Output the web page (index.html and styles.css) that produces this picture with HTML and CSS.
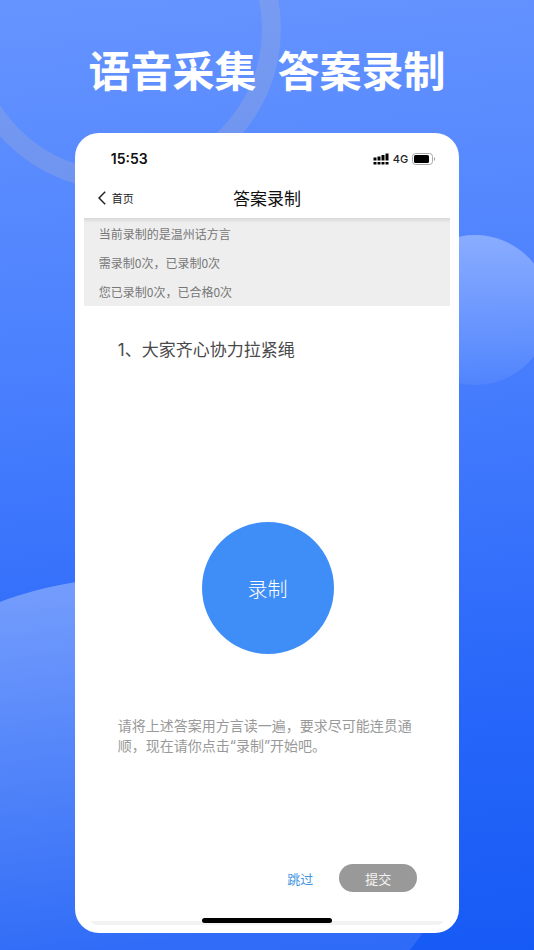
FILE: index.html
```html
<!DOCTYPE html>
<html lang="zh-CN">
<head>
    <meta charset="UTF-8">
    <meta name="viewport" content="width=device-width, initial-scale=1.0">
    <title>答案录制</title>
    <link rel="stylesheet" href="styles.css">
</head>
<body>
    <svg class="backdrop" viewBox="0 0 534 950" preserveAspectRatio="xMidYMid slice" aria-hidden="true">
        <defs>
            <linearGradient id="ballFill" x1="0" y1="0" x2="0" y2="1">
                <stop offset="0" stop-color="#fff" stop-opacity="0.32"/>
                <stop offset="1" stop-color="#fff" stop-opacity="0.06"/>
            </linearGradient>
            <linearGradient id="hillFill" gradientUnits="userSpaceOnUse" x1="60" y1="576" x2="110" y2="950">
                <stop offset="0" stop-color="#fff" stop-opacity="0.31"/>
                <stop offset="1" stop-color="#fff" stop-opacity="0.1"/>
            </linearGradient>
        </defs>
        <circle cx="120" cy="29" r="151.5" fill="none" stroke="#b0b4c8" stroke-opacity="0.26" stroke-width="19"/>
        <circle cx="475" cy="310" r="75" fill="url(#ballFill)"/>
        <ellipse cx="140" cy="821" rx="318" ry="244" fill="url(#hillFill)"/>
    </svg>

    <div class="page">
        <h1 class="headline"><span>语音采集</span> <span>答案录制</span></h1>

        <div class="phone">
            <div class="status-bar">
                <span class="time">15:53</span>
                <div class="status-icons">
                    <svg width="16" height="12" viewBox="0 0 16 12" aria-hidden="true">
                        <path d="M0.5 4.5h3v3h-3zM4.5 3.5h3v4h-3zM8.5 2h3v5.5h-3zM12.5 0.5h3v7h-3zM0.5 9h3v2.5h-3zM4.5 9h3v2.5h-3zM8.5 9h3v2.5h-3zM12.5 9h3v2.5h-3z"/>
                    </svg>
                    <span class="network">4G</span>
                    <svg width="24" height="12" viewBox="0 0 24 12" aria-hidden="true">
                        <rect x="0.5" y="0.5" width="20" height="11" rx="3" fill="none" stroke="#a8a8a8"/>
                        <rect x="2" y="2" width="15" height="8" rx="1.5"/>
                        <path d="M22 4v4c1.6-.7 1.6-3.3 0-4z" fill="#a8a8a8"/>
                    </svg>
                </div>
            </div>

            <div class="nav-bar">
                <a class="back" href="#">
                    <svg width="8" height="14" viewBox="0 0 8 14" fill="none" stroke="#222" stroke-width="1.5" aria-hidden="true">
                        <path d="M7.2 0.8L1 7l6.2 6.2"/>
                    </svg>
                    首页
                </a>
                <h2 class="nav-title">答案录制</h2>
            </div>

            <div class="info">
                <p>当前录制的是温州话方言</p>
                <p>需录制0次，已录制0次</p>
                <p>您已录制0次，已合格0次</p>
            </div>

            <div class="content">
                <p class="question">1、大家齐心协力拉紧绳</p>
                <button class="record" type="button">录制</button>
                <p class="hint">请将上述答案用方言读一遍，要求尽可能连贯通顺，现在请你点击“录制”开始吧。</p>
                <div class="actions">
                    <button class="skip" type="button">跳过</button>
                    <button class="submit" type="button">提交</button>
                </div>
            </div>

            <div class="home-area">
                <div class="home-bar"></div>
            </div>
        </div>
    </div>
</body>
</html>
```

FILE: styles.css
```css
* {
    box-sizing: border-box;
}
body {
    margin: 0;
    min-height: 100vh;
    position: relative;
    overflow-x: hidden;
    font-family: Inter, "Noto Sans CJK SC", sans-serif;
    background: linear-gradient(175deg, #6694ff 0%, #4a80fe 38%, #2766f9 75%, #165af5 100%);
}
h1, h2, p {
    margin: 0;
}
button {
    padding: 0;
    border: 0;
    background: none;
    font-family: inherit;
    cursor: pointer;
}
.backdrop {
    position: absolute;
    top: 0;
    left: 0;
    width: 100%;
    height: 100%;
}
.page {
    position: relative;
    min-height: 100vh;
    padding: 38px 14% 17px;
    display: flex;
    flex-direction: column;
}
.headline {
    display: flex;
    justify-content: center;
    gap: 21px;
    margin: 0 -60px 33px;
    font-family: "Noto Sans CJK SC", sans-serif;
    font-size: 42px;
    font-weight: 700;
    line-height: 62px;
    color: #fff;
    white-space: nowrap;
}
.phone {
    flex: 1;
    display: flex;
    flex-direction: column;
    padding: 8px 9px;
    border-radius: 24px;
    background-color: #fff;
}

/* status bar */
.status-bar {
    display: flex;
    align-items: center;
    justify-content: space-between;
    height: 36px;
    padding: 0 14px 0 27px;
}
.time {
    font-size: 14px;
    font-weight: 600;
    line-height: 18px;
    color: #111;
}
.status-icons {
    display: flex;
    align-items: center;
    gap: 4px;
}
.network {
    font-size: 11px;
    font-weight: 500;
    color: #222;
}

/* nav bar */
.nav-bar {
    display: grid;
    grid-template-columns: 1fr auto 1fr;
    align-items: center;
    height: 41px;
    padding: 0 14px;
}
.back {
    display: flex;
    align-items: center;
    gap: 6px;
    font-size: 11px;
    color: #222;
    text-decoration: none;
}
.nav-title {
    font-size: 17px;
    font-weight: 400;
    color: #111;
}

.info {
    padding: 1px 15px 0;
    background: linear-gradient(#d8d8d8, #eee 5px);
    font-family: "Noto Sans CJK SC", sans-serif;
    font-size: 12px;
    line-height: 29px;
    color: #777;
}

.content {
    flex: 1;
    display: flex;
    flex-direction: column;
    padding: 31px 33px 0 34px;
}
.question {
    font-size: 17px;
    line-height: 26px;
    color: #4a4a4a;
}
.record {
    align-self: center;
    width: 132px;
    height: 132px;
    margin: 159px 0 62px;
    border-radius: 50%;
    background-color: #3f8ef7;
    font-size: 20px;
    font-weight: 300;
    color: #fff;
}
.hint {
    font-size: 14px;
    line-height: 20px;
    color: #999;
}
.actions {
    display: flex;
    align-items: center;
    justify-content: flex-end;
    gap: 26px;
    margin: auto 0 26px;
}
.skip {
    font-size: 13px;
    color: #4495df;
}
.submit {
    width: 78px;
    height: 28px;
    border-radius: 14px;
    background-color: #999;
    font-size: 13px;
    color: #f4f4f4;
}
.home-area {
    margin: 0 6px;
    border-radius: 0 0 16px 16px;
    background: linear-gradient(#fff 3px, #f2f2f2 3px);
    height: 7px;
}
.home-bar {
    width: 130px;
    height: 5px;
    margin: 0 auto;
    border-radius: 3px;
    background-color: #000;
}
```
